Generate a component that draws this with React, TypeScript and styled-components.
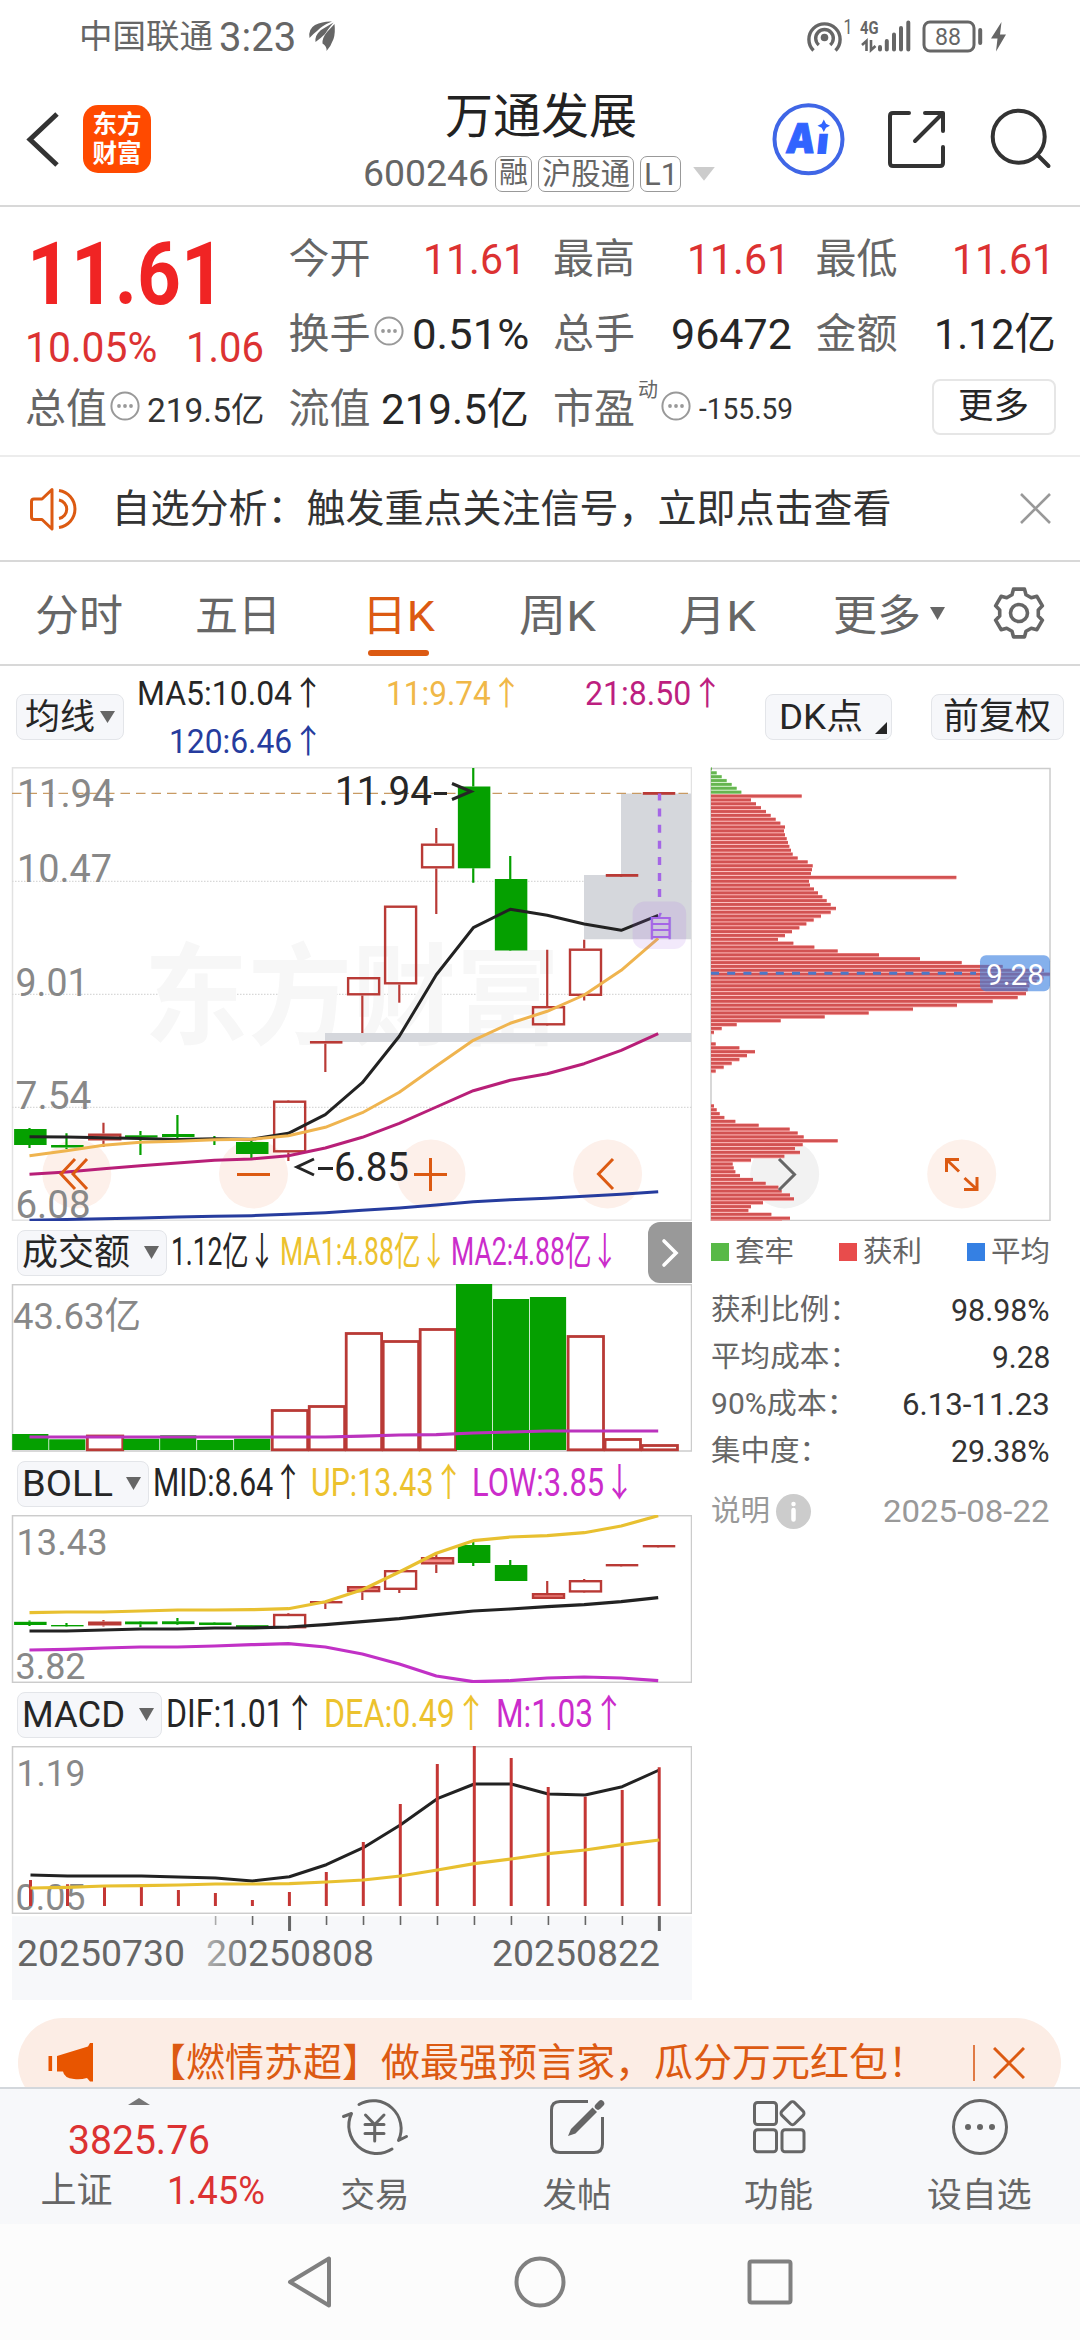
import React, { useLayoutEffect, useRef, useState } from 'react';
import styled, { createGlobalStyle } from 'styled-components';

const FONT = 'Roboto, "Noto Sans CJK SC", sans-serif';
const RED = '#dc3232';
const ORANGE = '#dc5a12';
const GREEN = '#05a000';
const CANDLE = '#b93a36';
const GREY = '#666';
const INK = '#262626';
const GOLD = '#ecc22e';
const PURPLE = '#cb2ccb';

const Global = createGlobalStyle`
  * { box-sizing: border-box; }
  body { margin: 0; background: #fff; font-family: ${FONT}; }
  svg { display: block; flex: none; }
`;

/* ---------- text that is fitted to a column width ---------- */

const FitBox = styled.span<{ $w: number; $ml?: number; $mr?: number; $mt?: number }>`
  display: block;
  flex: none;
  width: ${(p) => p.$w}px;
  margin-left: ${(p) => p.$ml ?? 0}px;
  margin-right: ${(p) => p.$mr ?? 0}px;
  margin-top: ${(p) => p.$mt ?? 0}px;
  line-height: 1;
`;

const FitText = styled.span<{ $size: number; $color: string; $weight: number }>`
  display: inline-block;
  white-space: nowrap;
  line-height: 1;
  vertical-align: top;
  transform-origin: 0 50%;
  font-size: ${(p) => p.$size}px;
  font-weight: ${(p) => p.$weight};
  color: ${(p) => p.$color};
`;

type FitProps = {
  w: number;
  size: number;
  color?: string;
  weight?: number;
  ml?: number;
  mr?: number;
  mt?: number;
  children: React.ReactNode;
};

function Fit({ w, size, color = INK, weight = 400, ml, mr, mt, children }: FitProps) {
  const ref = useRef<HTMLSpanElement>(null);
  const [scale, setScale] = useState(1);
  useLayoutEffect(() => {
    if (ref.current) setScale(w / ref.current.offsetWidth);
  }, [w, children]);
  return (
    <FitBox $w={w} $ml={ml} $mr={mr} $mt={mt}>
      <FitText ref={ref} $size={size} $color={color} $weight={weight} style={{ transform: `scaleX(${scale})` }}>
        {children}
      </FitText>
    </FitBox>
  );
}

/* ---------- page parts ---------- */

const Screen = styled.div`
  width: 1080px;
  height: 2340px;
  display: flex;
  flex-direction: column;
  overflow: hidden;
  background: #fff;
`;

const StatusBar = styled.div`
  height: 72px;
  flex: none;
  display: flex;
  align-items: center;
  padding: 0 72px 0 79px;
`;

const Spacer = styled.div`
  flex: 1;
`;

const Header = styled.header`
  height: 135px;
  flex: none;
  display: flex;
  align-items: flex-start;
  border-bottom: 2px solid #d8d8d8;
  padding: 28px 28px 0 26px;
`;

const Logo = styled.div`
  width: 68px;
  height: 68px;
  margin: 5px 0 0 24px;
  border-radius: 15px;
  background: #ff4a00;
  color: #fff;
  font-size: 24.5px;
  line-height: 29px;
  font-weight: 700;
  text-align: center;
  padding-top: 5px;
`;

const TitleBlock = styled.div`
  flex: 1;
  display: flex;
  flex-direction: column;
  align-items: flex-start;
`;

const CodeRow = styled.div`
  display: flex;
  align-items: center;
  gap: 6px;
  margin: 14px 0 0 212px;
`;

const Tag = styled.span<{ $w: number }>`
  width: ${(p) => p.$w}px;
  height: 36px;
  border: 1.5px solid #999;
  border-radius: 7px;
  display: flex;
  align-items: center;
  justify-content: center;
`;

const Quote = styled.section`
  height: 250px;
  flex: none;
  border-bottom: 2px solid #ececec;
  padding: 0 24px 0 25px;
  display: grid;
  grid-template-columns: 239px 240px 238px 240px;
  column-gap: 24.5px;
`;

const QuoteColumn = styled.div`
  display: grid;
  grid-template-rows: 75px 75px 75px;
  padding-top: 15px;
`;

const QuoteCell = styled.div`
  display: flex;
  align-items: center;
  justify-content: space-between;
`;

const PriceCell = styled.div`
  grid-row: span 2;
  display: flex;
  flex-direction: column;
  padding-top: 6px;
`;

const PriceDelta = styled.div`
  display: flex;
  justify-content: space-between;
  margin-top: 9px;
`;

const LabelGroup = styled.div`
  display: flex;
  align-items: center;
  gap: 3px;
`;

const Raised = styled.span`
  margin-top: -8px;
`;

const Sup = styled.span`
  align-self: flex-start;
  font-size: 20px;
  line-height: 20px;
  color: ${GREY};
  margin: -9px 0 0 0;
`;

const MoreButton = styled.button`
  width: 124px;
  height: 56px;
  margin: -6px 0 0 auto;
  border: 2px solid #e6e6e6;
  border-radius: 8px;
  background: #fff;
  display: flex;
  align-items: center;
  justify-content: center;
  padding: 0;
  font-family: inherit;
`;

const Notice = styled.section`
  height: 105px;
  flex: none;
  display: flex;
  align-items: center;
  border-bottom: 2px solid #d8d8d8;
  padding: 0 29px 0 29px;
`;

const Tabs = styled.nav`
  height: 104px;
  flex: none;
  display: flex;
  align-items: flex-start;
  border-bottom: 2px solid #d8d8d8;
  padding-left: 35px;
`;

const Tab = styled.div<{ $ml?: number }>`
  margin-left: ${(p) => p.$ml ?? 0}px;
  padding-top: 33px;
  display: flex;
  flex-direction: column;
  align-items: center;
`;

const Underline = styled.i`
  width: 61px;
  height: 6px;
  border-radius: 3px;
  background: ${ORANGE};
  margin-top: 12px;
`;

const Content = styled.main`
  flex: 1;
  min-height: 0;
  overflow: hidden;
`;

const MaRow = styled.div`
  height: 101px;
  display: flex;
  align-items: flex-start;
  padding: 0 16px;
`;

const Chip = styled.div<{ $w: number; $ml?: number; $mt?: number; $pl?: number; $pr?: number }>`
  width: ${(p) => p.$w}px;
  height: 46px;
  flex: none;
  margin-left: ${(p) => p.$ml ?? 0}px;
  margin-top: ${(p) => p.$mt ?? 0}px;
  padding: 0 ${(p) => p.$pr ?? 8}px 0 ${(p) => p.$pl ?? 8}px;
  border: 1.5px solid #e3e5e9;
  border-radius: 8px;
  background: #f6f7fa;
  display: flex;
  align-items: center;
  justify-content: space-between;
`;

const MaGrid = styled.div`
  display: grid;
  grid-template-columns: 186px 198px 201px;
  grid-template-rows: 48px 48px;
  justify-items: end;
  margin-left: 14px;
  padding-top: 11px;
`;

const Caret = styled.i<{ $w: number; $h: number; $color?: string; $up?: boolean }>`
  width: ${(p) => p.$w}px;
  height: ${(p) => p.$h}px;
  flex: none;
  background: ${(p) => p.$color ?? GREY};
  clip-path: ${(p) => (p.$up ? 'polygon(0 100%, 50% 0, 100% 100%)' : 'polygon(0 0, 100% 0, 50% 100%)')};
`;

const CodeCaret = styled(Caret)`
  margin-left: 6px;
`;

const TabCaret = styled(Caret)`
  margin: 45px 0 0 9px;
`;

const Corner = styled.i`
  width: 12px;
  height: 12px;
  background: ${INK};
  clip-path: polygon(100% 0, 100% 100%, 0 100%);
  margin-top: 22px;
`;

const Board = styled.div`
  display: grid;
  grid-template-columns: 692px 1fr;
`;

const IndicatorRow = styled.div`
  height: 63px;
  display: flex;
  align-items: center;
  padding-left: 17px;
`;

const ExpandTab = styled.div`
  width: 44px;
  height: 61px;
  margin-left: auto;
  border-radius: 12px 0 0 12px;
  background: #999;
  display: flex;
  align-items: center;
  justify-content: center;
`;

const SidePanel = styled.div`
  display: flex;
  flex-direction: column;
`;

const Legend = styled.div`
  height: 62px;
  display: flex;
  align-items: center;
  justify-content: space-between;
  width: 339px;
  margin-left: 19px;
`;

const LegendItem = styled.div<{ $color: string }>`
  display: flex;
  align-items: center;
  gap: 6px;
  &::before {
    content: '';
    width: 18px;
    height: 18px;
    background: ${(p) => p.$color};
  }
`;

const StatRow = styled.div<{ $mt?: number }>`
  height: 47px;
  width: 339px;
  margin: ${(p) => p.$mt ?? 0}px 0 0 19px;
  display: flex;
  align-items: center;
  justify-content: space-between;
`;

const InfoDot = styled.span`
  width: 35px;
  height: 35px;
  margin-left: 3px;
  border-radius: 50%;
  background: #ccc;
  display: flex;
  align-items: center;
  justify-content: center;
`;

const Banner = styled.div`
  width: 1043px;
  height: 90px;
  margin: 18px 0 0 18px;
  border-radius: 46px;
  background: #fcede5;
  display: flex;
  align-items: center;
  padding: 0 36px 0 28px;
`;

const Divider = styled.i`
  width: 2px;
  height: 36px;
  background: #e07a45;
  margin: 0 18px 0 auto;
`;

const BottomBar = styled.nav`
  height: 137px;
  flex: none;
  background: #f7f8fa;
  border-top: 2px solid #d3d7dc;
  display: grid;
  grid-template-columns: 274px 202px 202px 201px 201px;
`;

const IndexCell = styled.div`
  display: flex;
  flex-direction: column;
  align-items: center;
  padding: 9px 0 0 4px;
`;

const IndexLine = styled.div`
  display: flex;
  align-items: center;
  gap: 54px;
  margin: 11px 0 0 27px;
`;

const NavItem = styled.div`
  display: flex;
  flex-direction: column;
  align-items: center;
  padding-top: 6px;
`;

const SystemNav = styled.div`
  height: 116px;
  flex: none;
  background: #fcfcfc;
  display: flex;
  align-items: center;
  justify-content: center;
  gap: 180px;
`;

/* ---------- icons ---------- */

const Svg = ({ box, ...rest }: { box: [number, number, number, number] } & React.SVGProps<SVGSVGElement>) => (
  <svg width={box[2]} height={box[3]} viewBox={box.join(' ')} fill="none" {...rest} />
);

const LeafIcon = styled(Svg)`
  margin-left: 12px;
`;

const BackIcon = styled(Svg)`
  margin-top: 10px;
`;

const DotsIcon = () => (
  <Raised>
    <Svg box={[0, 0, 30, 30]}>
      <circle cx="15" cy="15" r="13.6" stroke="#999" strokeWidth="2" />
      <g fill="#999">
        <circle cx="9" cy="15" r="1.9" />
        <circle cx="15" cy="15" r="1.9" />
        <circle cx="21" cy="15" r="1.9" />
      </g>
    </Svg>
  </Raised>
);

const gearPoints = Array.from({ length: 6 }, (_, k) => {
  const at = (r: number, deg: number) => {
    const a = ((60 * k - 90 + deg) * Math.PI) / 180;
    return `${(27 + r * Math.cos(a)).toFixed(1)},${(27 + r * Math.sin(a)).toFixed(1)}`;
  };
  return [at(19.5, -21), at(24.5, -13), at(24.5, 13), at(19.5, 21)].join(' ');
}).join(' ');

const GearSvg = styled(Svg)`
  margin: 24px 34px 0 0;
`;

const GearIcon = () => (
  <GearSvg box={[0, 0, 54, 54]} stroke={GREY} strokeWidth="3.6" strokeLinejoin="round">
    <polygon points={gearPoints} />
    <circle cx="27" cy="27" r="8.5" />
  </GearSvg>
);

const CloseIcon = ({ size, color, width }: { size: number; color: string; width: number }) => (
  <Svg box={[0, 0, size, size]} stroke={color} strokeWidth={width}>
    <path d={`M1 1L${size - 1} ${size - 1}M${size - 1} 1L1 ${size - 1}`} />
  </Svg>
);

/* ---------- chart data ---------- */

const cx = (i: number) => 29.5 + i * 36.98;
const toLine = (ys: number[], dx = 0) => ys.map((y, i) => `${(cx(i) + dx).toFixed(1)},${y}`).join(' ');

type Candle = { up: boolean; top: number; bottom: number; high: number; low: number };
const c = (up: 0 | 1, top: number, bottom: number, high: number, low: number): Candle => ({ up: !!up, top, bottom, high, low });

const DAILY = [
  c(0, 1129, 1145, 1128, 1148), c(0, 1145, 1147.5, 1133.3, 1149), c(1, 1133.5, 1140.5, 1122.7, 1147),
  c(0, 1135.3, 1137.5, 1131, 1155), c(0, 1134, 1137, 1115, 1138), c(0, 1138, 1140, 1136, 1145),
  c(0, 1142, 1154, 1141, 1158), c(1, 1100.5, 1152.5, 1100, 1161), c(1, 1041, 1043.6, 1041, 1072),
  c(1, 977, 995.5, 977, 1033), c(1, 905.5, 984.5, 905.5, 1002.7), c(1, 843.5, 868.5, 828, 914),
  c(0, 786.5, 868.3, 768, 882.7), c(0, 879, 950.5, 856, 951), c(1, 1006, 1025.5, 949.7, 1025),
  c(1, 948.5, 996, 939.7, 1000.5), c(1, 874, 876.8, 875, 876), c(1, 792, 794.8, 793, 794),
];

const BOLL = [
  c(0, 1621.8, 1625, 1620.5, 1626), c(0, 1625, 1626.4, 1623, 1626), c(1, 1621.5, 1625.5, 1620, 1626.5),
  c(0, 1621.5, 1624.3, 1621, 1627), c(0, 1621.3, 1624.2, 1618, 1625), c(0, 1622.5, 1625, 1622, 1625),
  c(0, 1625.2, 1627, 1625, 1628), c(1, 1613.8, 1628.4, 1613, 1628), c(1, 1601, 1603.4, 1601, 1609),
  c(1, 1586, 1592.3, 1586, 1600), c(1, 1570, 1590, 1570, 1593), c(1, 1557, 1564.5, 1554, 1573),
  c(0, 1545, 1563, 1540, 1566), c(0, 1565, 1581, 1560, 1581), c(1, 1593, 1599, 1581, 1599),
  c(1, 1580, 1592.6, 1579, 1593), c(1, 1564, 1566.4, 1564, 1566), c(1, 1545, 1547.4, 1545, 1547),
];

const MA5 = [1136.7, 1137, 1137.7, 1138.5, 1139.6, 1138.8, 1139.3, 1133.3, 1114.7, 1082.7, 1036.3, 974.7, 927.7, 909.3, 915.3, 924, 930.3, 915.3];
const MA11 = [1155.7, 1150.7, 1145.3, 1142.3, 1141.3, 1139.7, 1139.3, 1135.7, 1127.3, 1112.7, 1092.3, 1066, 1040.3, 1023.3, 1011.3, 995, 970.3, 938.3];
const MA21 = [1174.3, 1172, 1168.7, 1165.7, 1163, 1160.3, 1159, 1155.7, 1148, 1137.3, 1123.3, 1107, 1090.7, 1080.3, 1073.7, 1063.7, 1050.3, 1033.7];
const MA120 = [1220.2, 1219.5, 1218.7, 1218, 1217, 1216.3, 1215.7, 1214.3, 1212.7, 1210.3, 1208, 1205, 1201.7, 1199.7, 1198.3, 1196.3, 1194.3, 1191.7];

const TURNOVER: [number, boolean][] = [
  [1434, false], [1439.3, false], [1436, true], [1438.7, false], [1435.3, false], [1440, false], [1438.7, false],
  [1410.5, true], [1406.5, true], [1333.5, true], [1341.5, true], [1329.5, true], [1284, false], [1299, false],
  [1297, false], [1336.5, true], [1439.5, true], [1445.5, true],
];
const TURNOVER_MA = [1437, 1437, 1437, 1437, 1437, 1437, 1437, 1437, 1437, 1436.2, 1435, 1434.7, 1433, 1432, 1431, 1431, 1431, 1431];

const BOLL_UP = [1612.7, 1612, 1612, 1611, 1610, 1610, 1609.7, 1608.7, 1601.7, 1589.7, 1572, 1553.3, 1540.7, 1537, 1535.7, 1532.7, 1526, 1515.7];
const BOLL_MID = [1631, 1631, 1630, 1629, 1629, 1628, 1628, 1627, 1624.7, 1621.7, 1618.7, 1614.7, 1611, 1609, 1606.7, 1604.7, 1601.7, 1597.7];
const BOLL_LOW = [1650, 1649.3, 1648, 1647, 1647, 1646, 1644.7, 1643.7, 1647, 1654, 1664, 1676, 1681.7, 1680.7, 1678, 1677, 1678, 1680.7];

const MACD_BARS = [1880, 1884.3, 1885, 1886.7, 1890, 1893, 1900, 1892, 1872, 1842, 1804, 1764, 1746, 1758, 1787, 1796.7, 1790, 1767.3];
const DIF = [1875, 1876, 1876, 1876, 1877, 1878, 1881, 1876.7, 1864.7, 1847.7, 1825, 1798.7, 1784, 1784, 1794, 1795, 1786.7, 1770];
const DEA = [1888, 1887.3, 1886, 1885.7, 1885, 1884, 1884, 1883.7, 1882, 1880, 1876, 1870, 1863.7, 1859, 1853.7, 1850, 1844.7, 1840];

const TRAPPED_COUNT = 7;
const COST_BARS = [
  3, 17, 32, 47, 62, 77, 91, 272, 120, 135, 150, 165, 179, 194, 208, 222, 219, 222, 227, 231, 235, 240, 245, 260, 290, 305,
  303, 300, 736, 294, 297, 309, 321, 334, 347, 359, 375, 359, 330, 308, 286, 265, 243, 222, 201, 247, 310, 380, 504, 627,
  752, 875, 999, 1017, 997, 977, 955, 950, 945, 920, 845, 738, 606, 473, 341, 209, 77, 32, 9, 0, 0, 14, 85, 132, 108, 85,
  62, 38, 14, 0, 0, 0, 0, 0, 0, 0, 0, 9, 17, 26, 40, 73, 143, 236, 260, 278, 380, 275, 252, 267, 220, 120, 65, 68, 73, 87,
  126, 164, 202, 212, 237, 249, 156, 120, 112, 181, 237, 213,
];

/* ---------- charts ---------- */

type LabelProps = { x: number; y: number; w: number; size: number; fill?: string; weight?: number; children: string };
const Label = ({ x, y, w, size, fill = '#888', weight = 400, children }: LabelProps) => (
  <text x={x} y={y} textLength={w} lengthAdjust="spacingAndGlyphs" fontSize={size} fontWeight={weight} fill={fill} fontFamily={FONT}>
    {children}
  </text>
);

const Candles = ({ data }: { data: Candle[] }) => (
  <g>
    {data.map((d, i) => {
      const color = d.up ? CANDLE : GREEN;
      const h = d.bottom - d.top;
      const hollow = d.up && h > 3;
      return (
        <g key={i}>
          <path d={`M${cx(i)} ${d.high}V${d.top}M${cx(i)} ${d.bottom}V${d.low}`} stroke={color} strokeWidth="2.2" />
          {hollow ? (
            <rect x={cx(i) - 14.2} y={d.top + 1.2} width="31" height={Math.max(h - 2.4, 1)} fill={h < 8 ? '#f58a85' : 'none'} stroke={color} strokeWidth="2.4" />
          ) : (
            <rect x={cx(i) - 15.4} y={d.top} width="32.5" height={h} fill={color} />
          )}
        </g>
      );
    })}
  </g>
);

const Frame = ({ y, h, color = '#ccc' }: { y: number; h: number; color?: string }) => (
  <rect x="12.5" y={y} width="679" height={h} stroke={color} strokeWidth="1.5" />
);

const Round = ({ x, fill, opacity = 1 }: { x: number; fill: string; opacity?: number }) => (
  <circle cx={x} cy="1174" r="34.5" fill={fill} fillOpacity={opacity} />
);

const PriceChart = () => (
  <Svg box={[0, 767, 692, 454]}>
    <Frame y={767.8} h={452.4} color="#e2e2e2" />
    <path d="M12 881.3H692M12 994.3H692M12 1107.3H692" stroke="#d8d8d8" strokeWidth="1.3" strokeDasharray="1.5 1.5" />
    <Label x={144} y={1036} w={416} size={110} fill="#f7f7f7" weight={700}>东方财富</Label>
    <Round x={76.8} fill="#fdf0ea" />
    <Round x={253.5} fill="#fdf0ea" />
    <Round x={431} fill="#fdf0ea" />
    <Round x={607.6} fill="#fdf0ea" />
    <path d="M584 875H621V793.5H691V939.3H584Z" fill="#d5d7dc" />
    <path d="M325 1033H691V1042H325Z" fill="#d5d7dc" />
    <path d="M12 793.4H691" stroke="#c89a63" strokeWidth="1.4" strokeDasharray="9.5 6" />
    <Label x={17} y={807} w={97} size={39.5}>11.94</Label>
    <Label x={17} y={882} w={95} size={39.5}>10.47</Label>
    <Label x={15.5} y={996} w={73} size={39.5}>9.01</Label>
    <Label x={15.5} y={1109} w={76} size={39.5}>7.54</Label>
    <Label x={15.5} y={1217.5} w={75} size={39.5}>6.08</Label>
    <Candles data={DAILY} />
    <g strokeWidth="3" strokeLinejoin="round">
      <polyline points={toLine(MA120)} stroke="#263c9e" />
      <polyline points={toLine(MA21)} stroke="#b81f78" />
      <polyline points={toLine(MA5)} stroke="#222" />
      <polyline points={toLine(MA11)} stroke="#efb44f" />
    </g>
    <Label x={335} y={805} w={97} size={40} fill={INK}>11.94</Label>
    <path d="M434 793.5H447M452 783.5L471 791.5L452 799.5" stroke={INK} strokeWidth="3" />
    <path d="M314 1159L297 1167L314 1175M318 1168.5H333" stroke={INK} strokeWidth="3" />
    <Label x={334} y={1181} w={75} size={41} fill={INK}>6.85</Label>
    <path d="M659.5 793.5V898" stroke="#a566e6" strokeWidth="3.4" strokeDasharray="8 8.1" strokeDashoffset="1" />
    <rect x="632.6" y="901.5" width="53.6" height="47.5" rx="12" fill="#a566e6" fillOpacity=".14" />
    <Label x={646} y={936.5} w={29} size={28} fill="#a566e6">自</Label>
    <g stroke={ORANGE} strokeWidth="3">
      <path d="M75 1159L61 1174L75 1189M87 1159L73 1174L87 1189" />
      <path d="M237 1174.4H270M414 1174.4H447M430.5 1158V1191" />
      <path d="M613 1159L598.5 1174L613 1189" />
    </g>
  </Svg>
);

const CostChart = () => (
  <Svg box={[692, 767, 388, 454]}>
    <rect x="711" y="768.5" width="339" height="452" stroke="#ccc" strokeWidth="1.5" />
    <Round x={784.7} fill="#f2f2f2" />
    {COST_BARS.map((v, i) => {
      const trapped = i < TRAPPED_COUNT;
      const y = 767.2 + i * 3.873;
      return v > 0 ? (
        <g key={i}>
          <rect x="711" y={y} width={v / 3} height="3.873" fill={trapped ? '#c9efbf' : '#fbb0b0'} />
          <rect x="711" y={y + 0.3} width={v / 3} height="2.8" fill={trapped ? '#66b550' : '#d25252'} />
        </g>
      ) : null;
    })}
    <path d="M711 973.3H976" stroke="#4c78c8" strokeWidth="3" strokeDasharray="8 8.2" />
    <rect x="980" y="955.3" width="70" height="36" rx="6" fill="#3a80e0" fillOpacity=".62" />
    <Label x={986} y={985} w={58} size={30} fill="#fff">9.28</Label>
    <path d="M779 1159L794.5 1174.5L779 1190" stroke="#666" strokeWidth="3" />
    <Round x={961.7} fill="#fdf0ea" opacity={0.95} />
    <path d="M959 1159.5H946.5V1172M947 1160L959 1171.5M964.5 1178L976.5 1189M964 1189.5H977V1177" stroke={ORANGE} strokeWidth="3" />
  </Svg>
);

const TurnoverChart = () => (
  <Svg box={[0, 1284, 692, 168]}>
    <Frame y={1284.7} h={166.3} />
    {TURNOVER.map(([top, up], i) =>
      up ? (
        <rect key={i} x={13.4 + i * 36.98} y={top} width="35.4" height={1449.8 - top} stroke={CANDLE} strokeWidth="2.8" fill="#fff" />
      ) : (
        <rect key={i} x={12.2 + i * 36.98} y={top} width="36.2" height={1450 - top} fill={GREEN} />
      ),
    )}
    <Label x={13} y={1329} w={128} size={37}>43.63亿</Label>
    <polyline points={toLine(TURNOVER_MA)} stroke="#bb33bd" strokeWidth="3.2" />
  </Svg>
);

const BollChart = () => (
  <Svg box={[0, 1515, 692, 168]}>
    <Frame y={1515.7} h={166.6} />
    <Label x={16.5} y={1555} w={91} size={37}>13.43</Label>
    <Label x={15.5} y={1679} w={70} size={37}>3.82</Label>
    <Candles data={BOLL} />
    <g strokeWidth="3.2" strokeLinejoin="round">
      <polyline points={toLine(BOLL_MID)} stroke="#222" />
      <polyline points={toLine(BOLL_UP)} stroke="#e8c030" />
      <polyline points={toLine(BOLL_LOW)} stroke="#c131c6" />
    </g>
  </Svg>
);

const MacdChart = () => (
  <Svg box={[0, 1746, 692, 168]}>
    <Frame y={1746.7} h={166.6} />
    <Label x={16.5} y={1786} w={69} size={37}>1.19</Label>
    <Label x={15.5} y={1910} w={70} size={37}>0.05</Label>
    <polyline points={toLine(DIF, 1)} stroke="#222" strokeWidth="3" strokeLinejoin="round" />
    <path d={MACD_BARS.map((y, i) => `M${(cx(i) + 1).toFixed(1)} 1906V${y}`).join('')} stroke="#c43634" strokeWidth="3" />
    <polyline points={toLine(DEA, 1)} stroke="#e8c030" strokeWidth="3.2" strokeLinejoin="round" />
  </Svg>
);

const DateAxis = () => (
  <Svg box={[0, 1914, 692, 86]}>
    <defs>
      <linearGradient id="fade" gradientUnits="userSpaceOnUse" x1="200" x2="250" y1="0" y2="0">
        <stop offset="0" stopColor="#bbb" />
        <stop offset="1" stopColor="#666" />
      </linearGradient>
    </defs>
    <rect x="12" y="1916.3" width="680" height="84" fill="#f7f8fa" />
    {Array.from({ length: 13 }, (_, k) => k + 5).map((i) => {
      const major = i === 7 || i === 17;
      return (
        <path key={i} d={`M${cx(i) + 1.2} 1916V${major ? 1931 : 1925}`} stroke={i === 5 ? '#aaa' : GREY} strokeWidth={major ? 3 : 1.6} />
      );
    })}
    <Label x={17} y={1965.5} w={168} size={37} fill={GREY}>20250730</Label>
    <Label x={206} y={1965.5} w={168} size={37} fill="url(#fade)">20250808</Label>
    <Label x={492} y={1965.5} w={168} size={37} fill={GREY}>20250822</Label>
  </Svg>
);

/* ---------- sections ---------- */

const Status = () => (
  <StatusBar>
    <Fit w={134} size={33.5} color={GREY} mt={2}>中国联通</Fit>
    <Fit w={77} size={40} color={GREY} ml={6} mt={3}>3:23</Fit>
    <LeafIcon box={[308, 20, 28, 32]} fill={GREY}>
      <path d="M309.500 38Q308 29 315 25Q323 21 332 21.500Q322 25.500 317 31Q313 34 309.500 38Z" />
      <path d="M315.500 42Q314.500 35.500 321 30L333.500 22.500Q328 29 325 34Q321 38 315.500 42Z" />
      <path d="M322.500 43.500Q322 38 327 32L334.500 24Q335.500 33 333.500 39Q331 46 326.500 51Q327 46 322.500 43.500Z" />
    </LeafIcon>
    <Spacer />
    <Svg box={[806, 6, 202, 60]}>
      <g stroke={GREY} strokeWidth="3.4">
        <path d="M813.500 50.500A15.600 15.600 0 1 1 835.500 50.500" />
        <path d="M818.800 45A8.800 8.800 0 1 1 830.200 45" />
      </g>
      <circle cx="824.5" cy="37.5" r="3.8" fill={GREY} />
      <Label x={843.5} y={34} w={9} size={20} fill={GREY}>1</Label>
      <Label x={860} y={34.3} w={18.5} size={19} fill={GREY} weight={700}>4G</Label>
      <path d="M862 45L866.500 41V51M871 40V50L875.500 46" stroke={GREY} strokeWidth="2.6" />
      <path d="M880 47V49.500M886.800 41V49.500M894 34.500V49.500M901 28V49.500M908.300 22.500V49.500" stroke={GREY} strokeWidth="4" strokeLinecap="round" />
      <rect x="924" y="22" width="50" height="29" rx="6" stroke={GREY} strokeWidth="3" />
      <Label x={935} y={45.3} w={26} size={23} fill={GREY}>88</Label>
      <path d="M980.200 30V43" stroke={GREY} strokeWidth="4" strokeLinecap="round" />
      <path d="M1001.500 22L991 38.500H997.500L996 51.500L1006 34.500H1000Z" fill={GREY} />
    </Svg>
  </StatusBar>
);

const TopHeader = () => (
  <Header>
    <BackIcon box={[26, 110, 33, 60]} stroke="#333" strokeWidth="5">
      <path d="M57 114L30 139.500L57 165" />
    </BackIcon>
    <Logo>
      东方
      <br />
      财富
    </Logo>
    <TitleBlock>
      <Fit w={192} size={48} ml={294} mt={-7} color="#222">万通发展</Fit>
      <CodeRow>
        <Fit w={126} size={36.5} color={GREY} mt={1}>600246</Fit>
        <Tag $w={37}><Fit w={29} size={29} color={GREY}>融</Fit></Tag>
        <Tag $w={96}><Fit w={88} size={30} color={GREY}>沪股通</Fit></Tag>
        <Tag $w={41}><Fit w={34} size={32} color={GREY} mt={1}>L1</Fit></Tag>
        <CodeCaret $w={22} $h={14} $color="#ccc" />
      </CodeRow>
    </TitleBlock>
    <Svg box={[770, 100, 282, 80]}>
      <circle cx="808.500" cy="139.300" r="34" stroke="#3f66e6" strokeWidth="4" />
      <g transform="skewX(-6)" style={{ transformOrigin: '800px 153px' }}>
        <text x="785" y="153" fontFamily="Inter, sans-serif" fontWeight="900" fontSize="41" textLength="29" lengthAdjust="spacingAndGlyphs" fill="#3164ff" stroke="#3164ff">A</text>
        <text x="815" y="154" fontFamily="Inter, sans-serif" fontWeight="900" fontSize="37" textLength="13" lengthAdjust="spacingAndGlyphs" fill="#3164ff">i</text>
      </g>
      <rect x="816" y="119" width="15" height="14" fill="#fff" />
      <path d="M823.800 119.500L826 123.800L830 125.700L826 127.800L823.800 132L821.600 127.800L817.500 125.700L821.600 123.800Z" fill="#3164ff" />
      <g stroke="#333" strokeWidth="4" strokeLinecap="round" strokeLinejoin="round">
        <path d="M909 113H893Q890 113 890 116V163Q890 166 893 166H940Q943 166 943 163V147M925 113H943V131M942 114L915 141" />
        <circle cx="1018.700" cy="136.700" r="26" />
        <path d="M1037.500 155L1048.500 166" />
      </g>
    </Svg>
  </Header>
);

const QuotePanel = () => (
  <Quote>
    <QuoteColumn>
      <PriceCell>
        <Fit w={198} size={87} color="#f02424" weight={700} ml={2} mt={3}>11.61</Fit>
        <PriceDelta>
          <Fit w={132} size={42} color={RED}>10.05%</Fit>
          <Fit w={78} size={42} color={RED}>1.06</Fit>
        </PriceDelta>
      </PriceCell>
      <QuoteCell>
        <LabelGroup>
          <Fit w={82} size={41} color={GREY}>总值</Fit>
          <DotsIcon />
        </LabelGroup>
        <Fit w={117} size={34} color="#333">219.5亿</Fit>
      </QuoteCell>
    </QuoteColumn>
    <QuoteColumn>
      <QuoteCell>
        <Fit w={82} size={41} color={GREY}>今开</Fit>
        <Fit w={103} size={43} color={RED} mr={3}>11.61</Fit>
      </QuoteCell>
      <QuoteCell>
        <LabelGroup>
          <Fit w={82} size={41} color={GREY}>换手</Fit>
          <DotsIcon />
        </LabelGroup>
        <Fit w={117} size={43} color={INK}>0.51%</Fit>
      </QuoteCell>
      <QuoteCell>
        <Fit w={82} size={41} color={GREY}>流值</Fit>
        <Fit w={148} size={43} color={INK}>219.5亿</Fit>
      </QuoteCell>
    </QuoteColumn>
    <QuoteColumn>
      <QuoteCell>
        <Fit w={82} size={41} color={GREY}>最高</Fit>
        <Fit w={103} size={43} color={RED} mr={1}>11.61</Fit>
      </QuoteCell>
      <QuoteCell>
        <Fit w={82} size={41} color={GREY}>总手</Fit>
        <Fit w={121} size={43} color={INK} mr={-1}>96472</Fit>
      </QuoteCell>
      <QuoteCell>
        <LabelGroup>
          <Fit w={82} size={41} color={GREY}>市盈</Fit>
          <Sup>动</Sup>
          <DotsIcon />
        </LabelGroup>
        <Fit w={94} size={29} color="#333" mr={-2}>-155.59</Fit>
      </QuoteCell>
    </QuoteColumn>
    <QuoteColumn>
      <QuoteCell>
        <Fit w={82} size={41} color={GREY}>最低</Fit>
        <Fit w={103} size={43} color={RED} mr={1}>11.61</Fit>
      </QuoteCell>
      <QuoteCell>
        <Fit w={82} size={41} color={GREY}>金额</Fit>
        <Fit w={122} size={43} color={INK}>1.12亿</Fit>
      </QuoteCell>
      <QuoteCell>
        <MoreButton>
          <Fit w={71} size={35.5} color={INK} mt={1}>更多</Fit>
        </MoreButton>
      </QuoteCell>
    </QuoteColumn>
  </Quote>
);

const NoticeBar = () => (
  <Notice>
    <Svg box={[29, 485, 52, 46]} stroke={ORANGE} strokeWidth="3" strokeLinejoin="round">
      <path d="M52 488.500L42 498H34Q31.500 498 31.500 500.500V516Q31.500 518.500 34 518.500H42L52 528Z" />
      <path d="M59 489.500A18.700 18.700 0 0 1 59 526.500M59 499A9.400 9.400 0 0 1 59 517.500" />
    </Svg>
    <Fit w={780} size={39} color="#333" ml={30.5} mt={2}>自选分析：触发重点关注信号，立即点击查看</Fit>
    <Spacer />
    <CloseIcon size={31} color="#999" width={2.6} />
  </Notice>
);

const TabBar = () => (
  <Tabs>
    <Tab><Fit w={88} size={43} color={GREY}>分时</Fit></Tab>
    <Tab $ml={72}><Fit w={86} size={43} color={GREY}>五日</Fit></Tab>
    <Tab $ml={81}>
      <Fit w={73} size={43} color={ORANGE} weight={400}>日K</Fit>
      <Underline />
    </Tab>
    <Tab $ml={84}><Fit w={77} size={43} color={GREY}>周K</Fit></Tab>
    <Tab $ml={83}><Fit w={77} size={43} color={GREY}>月K</Fit></Tab>
    <Tab $ml={77}><Fit w={88} size={43} color={GREY}>更多</Fit></Tab>
    <TabCaret $w={15} $h={13} />
    <Spacer />
    <GearIcon />
  </Tabs>
);

type Reading = { w: number; ml: number; color: string; text: string };
const Indicator = ({ name, nameW, boxW, readings, tail }: { name: string; nameW: number; boxW: number; readings: Reading[]; tail?: React.ReactNode }) => (
  <IndicatorRow>
    <Chip $w={boxW} $pl={4} $pr={7}>
      <Fit w={nameW} size={36}>{name}</Fit>
      <Caret $w={15} $h={13} />
    </Chip>
    {readings.map((r) => (
      <Fit key={r.text} w={r.w} ml={r.ml} size={38.5} color={r.color}>{r.text}</Fit>
    ))}
    {tail}
  </IndicatorRow>
);

const CostStats = () => (
  <>
    <Legend>
      <LegendItem $color="#58b947"><Fit w={59} size={29} color={GREY}>套牢</Fit></LegendItem>
      <LegendItem $color="#e84c4c"><Fit w={59} size={29} color={GREY}>获利</Fit></LegendItem>
      <LegendItem $color="#3580e3"><Fit w={59} size={29} color={GREY}>平均</Fit></LegendItem>
    </Legend>
    <StatRow $mt={4}>
      <Fit w={148} size={29} color={GREY}>获利比例：</Fit>
      <Fit w={99} size={31} color="#333">98.98%</Fit>
    </StatRow>
    <StatRow>
      <Fit w={148} size={29} color={GREY}>平均成本：</Fit>
      <Fit w={58} size={31} color="#333">9.28</Fit>
    </StatRow>
    <StatRow>
      <Fit w={146} size={29} color={GREY}>90%成本：</Fit>
      <Fit w={148} size={31} color="#333">6.13-11.23</Fit>
    </StatRow>
    <StatRow>
      <Fit w={118} size={29} color={GREY}>集中度：</Fit>
      <Fit w={99} size={31} color="#333">29.38%</Fit>
    </StatRow>
    <StatRow $mt={13}>
      <LabelGroup>
        <Fit w={59} size={29} color="#999">说明</Fit>
        <InfoDot>
          <Svg box={[0, 0, 35, 35]} stroke="#fff" strokeWidth="4.500" strokeLinecap="round">
            <path d="M17.500 16V25.500M17.500 10V10.100" />
          </Svg>
        </InfoDot>
      </LabelGroup>
      <Fit w={167} size={31} color="#999">2025-08-22</Fit>
    </StatRow>
  </>
);

const Bottom = () => (
  <BottomBar>
    <IndexCell>
      <Caret $w={22} $h={7} $color="#777" $up />
      <Fit w={142} size={41} color={RED} mt={15}>3825.76</Fit>
      <IndexLine>
        <Fit w={72} size={36} color={GREY}>上证</Fit>
        <Fit w={98} size={38} color={RED}>1.45%</Fit>
      </IndexLine>
    </IndexCell>
    <NavItem>
      <Svg box={[341, 2096, 70, 64]} stroke={GREY} strokeWidth="3" strokeLinecap="round" strokeLinejoin="round">
        <path d="M360 2105.500A28 28 0 0 1 399.500 2141.500L407.500 2137.500" />
        <path d="M393 2150A28 28 0 0 1 352.500 2114.500L344.500 2117.500" />
        <path d="M366.500 2116L375.700 2125.500L385 2116M375.700 2125.500V2142M366 2125.500H385M366 2134.500H385" />
      </Svg>
      <Fit w={69} size={34.5} color={GREY} mt={19}>交易</Fit>
    </NavItem>
    <NavItem>
      <Svg box={[545, 2096, 64, 64]} stroke={GREY} strokeWidth="3">
        <path d="M588 2102.500H560Q551.500 2102.500 551.500 2111V2145Q551.500 2153.500 560 2153.500H594Q602.500 2153.500 602.500 2145V2118" />
        <path d="M568 2137L571 2130L592.500 2108.500L597 2113L575.500 2134.500Z" fill={GREY} stroke="none" />
        <path d="M598 2107.500L601 2104.500" strokeWidth="6.500" strokeLinecap="round" />
      </Svg>
      <Fit w={69} size={34.5} color={GREY} mt={19}>发帖</Fit>
    </NavItem>
    <NavItem>
      <Svg box={[747, 2096, 62, 64]} stroke={GREY} strokeWidth="3">
        <rect x="753.500" y="2103.500" width="22" height="22" rx="3" />
        <rect x="753.500" y="2130.800" width="22" height="22" rx="3" />
        <rect x="781" y="2130.800" width="22" height="22" rx="3" />
        <rect x="782.500" y="2105.200" width="18" height="18" rx="3" transform="rotate(45 791.500 2114.200)" />
      </Svg>
      <Fit w={69} size={34.5} color={GREY} mt={19}>功能</Fit>
    </NavItem>
    <NavItem>
      <Svg box={[947, 2096, 64, 64]} stroke={GREY} strokeWidth="3">
        <circle cx="979" cy="2128" r="26.500" />
        <g fill={GREY} stroke="none">
          <circle cx="967" cy="2128" r="3" />
          <circle cx="979" cy="2128" r="3" />
          <circle cx="991" cy="2128" r="3" />
        </g>
      </Svg>
      <Fit w={105} size={34.5} color={GREY} mt={19}>设自选</Fit>
    </NavItem>
  </BottomBar>
);

export default function App() {
  return (
    <>
      <Global />
      <Screen>
        <Status />
        <TopHeader />
        <QuotePanel />
        <NoticeBar />
        <TabBar />
        <Content>
          <MaRow>
            <Chip $w={108} $mt={28}>
              <Fit w={70} size={35}>均线</Fit>
              <Caret $w={15} $h={12} />
            </Chip>
            <MaGrid>
              <Fit w={187} size={33}>MA5:10.04↑</Fit>
              <Fit w={136} size={33} color="#f0b848">11:9.74↑</Fit>
              <Fit w={138} size={33} color="#bd1f80">21:8.50↑</Fit>
              <Fit w={155} size={33} color="#263c9e">120:6.46↑</Fit>
            </MaGrid>
            <Spacer />
            <Chip $w={127} $mt={28} $pl={4} $pr={4}>
              <Fit w={84} size={35} ml={9}>DK点</Fit>
              <Corner />
            </Chip>
            <Chip $w={133} $ml={39} $mt={28} $pl={11} $pr={11}>
              <Fit w={108} size={36}>前复权</Fit>
            </Chip>
          </MaRow>
          <Board>
            <div>
              <PriceChart />
              <Indicator
                name="成交额"
                nameW={108}
                boxW={150}
                readings={[
                  { w: 104, ml: 4, color: INK, text: '1.12亿↓' },
                  { w: 167, ml: 5, color: GOLD, text: 'MA1:4.88亿↓' },
                  { w: 167, ml: 4, color: PURPLE, text: 'MA2:4.88亿↓' },
                ]}
                tail={
                  <ExpandTab>
                    <Svg box={[0, 0, 18, 30]} stroke="#fff" strokeWidth="3.600" strokeLinecap="round">
                      <path d="M3 3L15 15L3 27" />
                    </Svg>
                  </ExpandTab>
                }
              />
              <TurnoverChart />
              <Indicator
                name="BOLL"
                nameW={91}
                boxW={132}
                readings={[
                  { w: 150, ml: 4, color: INK, text: 'MID:8.64↑' },
                  { w: 153, ml: 8, color: GOLD, text: 'UP:13.43↑' },
                  { w: 163, ml: 8, color: PURPLE, text: 'LOW:3.85↓' },
                ]}
              />
              <BollChart />
              <Indicator
                name="MACD"
                nameW={103}
                boxW={145}
                readings={[
                  { w: 150, ml: 4, color: INK, text: 'DIF:1.01↑' },
                  { w: 163, ml: 8, color: GOLD, text: 'DEA:0.49↑' },
                  { w: 129, ml: 9, color: PURPLE, text: 'M:1.03↑' },
                ]}
              />
              <MacdChart />
              <DateAxis />
            </div>
            <SidePanel>
              <CostChart />
              <CostStats />
            </SidePanel>
          </Board>
          <Banner>
            <Svg box={[46, 2041, 50, 44]} fill="#e85500">
              <rect x="48.500" y="2056" width="3.600" height="15" />
              <path d="M57 2056L88 2046.500L90 2043H93V2081.500H90L87 2078Q80 2080 74 2079Q64 2078 63 2071.500H57Z" />
            </Svg>
            <Fit w={780} size={39} color={ORANGE} ml={51}>【燃情苏超】做最强预言家，瓜分万元红包！</Fit>
            <Divider />
            <CloseIcon size={32} color={ORANGE} width={3} />
          </Banner>
        </Content>
        <Bottom />
        <SystemNav>
          <Svg box={[285, 2254, 48, 56]} stroke="#808080" strokeWidth="4" strokeLinejoin="round">
            <path d="M328 2258.500V2305.500L289 2282Z" />
          </Svg>
          <Svg box={[514, 2256, 52, 52]} stroke="#808080" strokeWidth="4">
            <circle cx="540" cy="2282" r="23.500" />
          </Svg>
          <Svg box={[745, 2258, 48, 48]} stroke="#808080" strokeWidth="4">
            <rect x="748.500" y="2261.500" width="41" height="41" rx="2" />
          </Svg>
        </SystemNav>
      </Screen>
    </>
  );
}
